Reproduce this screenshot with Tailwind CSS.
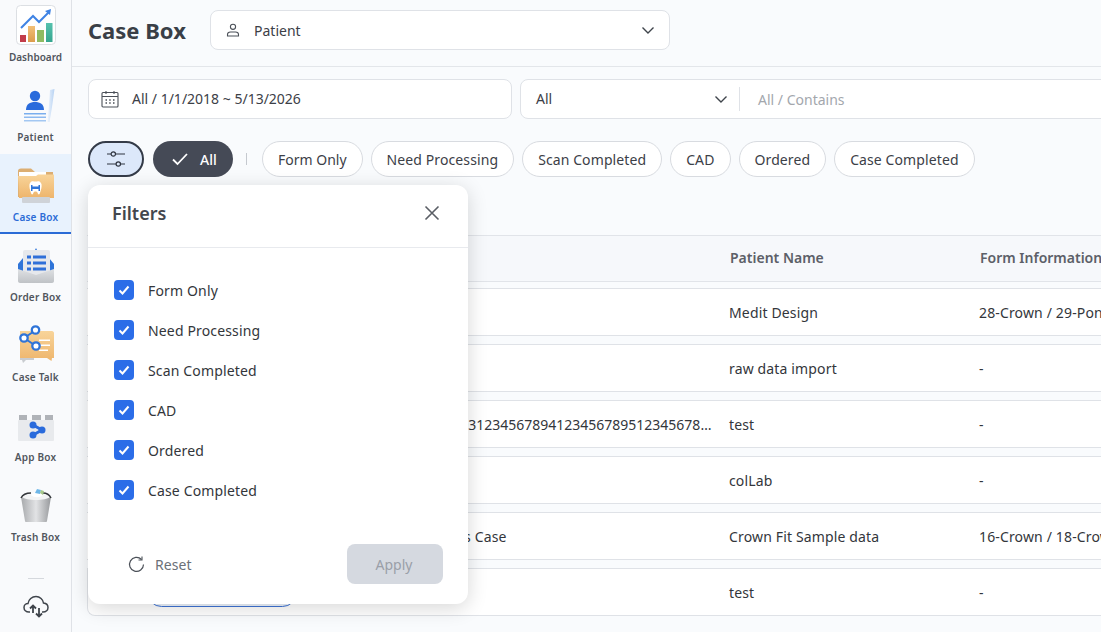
<!DOCTYPE html>
<html lang="en">
<head>
    <meta charset="UTF-8">
    <title>Case Box</title>
    <script src="https://cdn.jsdelivr.net/npm/@tailwindcss/browser@4"></script>
</head>
<body class="h-[632px] w-[1101px] overflow-hidden bg-[#f9fbfd] font-['Noto_Sans','Liberation_Sans',sans-serif] text-[14px] text-[#3c4047]">
<svg width="0" height="0" class="absolute">
    <defs>
        <linearGradient id="gOrange" x1="0" y1="0" x2="0" y2="1"><stop offset="0" stop-color="#f8d49a"/><stop offset="1" stop-color="#eeb56c"/></linearGradient>
        <linearGradient id="gTeal" x1="0" y1="0" x2="0" y2="1"><stop offset="0" stop-color="#57c2ae"/><stop offset="1" stop-color="#35a58f"/></linearGradient>
        <linearGradient id="gBar" x1="0" y1="0" x2="0" y2="1"><stop offset="0" stop-color="#f2c078"/><stop offset="1" stop-color="#dc9c4c"/></linearGradient>
        <linearGradient id="gBin" x1="0" y1="0" x2="1" y2="0"><stop offset="0" stop-color="#a7a9ac"/><stop offset=".5" stop-color="#e2e3e5"/><stop offset="1" stop-color="#97999c"/></linearGradient>
        <linearGradient id="gEnv" x1="0" y1="0" x2="0" y2="1"><stop offset="0" stop-color="#dfe1e4"/><stop offset="1" stop-color="#bfc2c6"/></linearGradient>
        <linearGradient id="gPaper" x1="0" y1="0" x2="1" y2="0"><stop offset="0" stop-color="#eef4fc"/><stop offset="1" stop-color="#b7d2f3"/></linearGradient>
    </defs>
</svg>
<div class="flex h-full">
    <!-- Sidebar -->
    <aside class="flex h-full w-[72px] shrink-0 flex-col items-center overflow-hidden border-r border-[#dfe2e7] bg-[#f9fafc]">
        <div class="-mt-[6px] w-full">
            <div class="flex h-[80px] flex-col items-center pt-[11px]">
                <svg class="h-[40px] w-[40px]" viewBox="0 0 40 40">
                    <rect x=".5" y=".5" width="39" height="39" rx="4" fill="#fff" stroke="#dcdfe3"/>
                    <rect x="4" y="30" width="6" height="7" fill="#c23c4a"/>
                    <rect x="12" y="21" width="7" height="16" fill="url(#gBar)"/>
                    <rect x="21" y="25" width="7" height="12" fill="#8fbb62"/>
                    <rect x="30" y="18" width="6.500" height="19" fill="url(#gTeal)"/>
                    <path d="M5 23L17 11L23 17L33 7" fill="none" stroke="#3f83e4" stroke-width="2"/>
                    <path d="M29 6L35 4L34 10Z" fill="#3f83e4"/>
                </svg>
                <span class="mt-[4px] h-[16px] text-[10px] font-semibold leading-[16px] text-[#50555c]">Dashboard</span>
            </div>
            <div class="flex h-[80px] flex-col items-center pt-[11px]">
                <svg class="h-[40px] w-[40px]" viewBox="0 0 40 40">
                    <path d="M34 5L38.500 4L36 22L33.500 37H31.500L33 20Z" fill="url(#gPaper)"/>
                    <circle cx="19" cy="11" r="5.200" fill="#2a6bdc"/>
                    <path d="M10 25C10 19 14 17 19 17S28 19 28 25Z" fill="#2a6bdc"/>
                    <rect x="8" y="28" width="22" height="1.500" fill="#7aaeee"/>
                    <rect x="8" y="31.500" width="22" height="1.500" fill="#8db9f0"/>
                    <rect x="8" y="35" width="22" height="1.500" fill="#a3c7f2"/>
                </svg>
                <span class="mt-[4px] h-[16px] text-[10px] font-semibold leading-[16px] tracking-[0.2px] text-[#50555c]">Patient</span>
            </div>
            <div class="flex h-[80px] flex-col items-center border-b-2 border-[#2b6bd6] bg-[#e8f2fd] pt-[11px]">
                <svg class="h-[40px] w-[40px]" viewBox="0 0 40 40">
                    <path d="M2 6C2 4.500 3 3.500 5 3.500H15L19 7H37V32H2Z" fill="#dcae72"/>
                    <rect x="3" y="7" width="27" height="4" fill="#fff"/>
                    <path d="M2 11H20L22 9.500H38V33H3Z" fill="url(#gOrange)"/>
                    <rect x="6" y="32" width="28" height="6" rx="1" fill="#cfd3d8"/>
                    <path d="M13.500 19C15 15 18 16.500 19.500 16.500S24 15 25.500 19C26 22 25 25 24 28C23.500 30 22 30 21.500 27.500C21 26 18 26 17.500 27.500C17 30 15.500 30 15 28C14 25 13 22 13.500 19Z" fill="#fff"/>
                    <path d="M15 20H16.500V21.500H22.500V20H24V26H22.500V24H16.500V26H15Z" fill="#2f74d8"/>
                </svg>
                <span class="mt-[4px] h-[16px] text-[10px] font-semibold leading-[16px] tracking-[0.2px] text-[#2b6bd6]">Case Box</span>
            </div>
            <div class="flex h-[80px] flex-col items-center pt-[11px]">
                <svg class="h-[40px] w-[40px]" viewBox="0 0 40 40">
                    <path d="M20 3L21 5H19Z" fill="#2f74d8"/>
                    <path d="M7 13L2 19V26H7Z" fill="#2f74d8"/>
                    <path d="M33 13L38 19V26H33Z" fill="#2f74d8"/>
                    <rect x="7" y="5" width="27" height="26" rx="2" fill="#e6e8ec"/>
                    <rect x="17" y="10.500" width="13" height="3" fill="#2f6fd8"/>
                    <rect x="17" y="16.500" width="13" height="3" fill="#2f6fd8"/>
                    <rect x="17" y="22.500" width="13" height="3" fill="#2f6fd8"/>
                    <rect x="11" y="10.500" width="4" height="3" fill="#2f6fd8"/>
                    <rect x="11" y="16.500" width="4" height="3" fill="#2f6fd8"/>
                    <rect x="11" y="22.500" width="4" height="3" fill="#2f6fd8"/>
                    <path d="M2 24L20 30L38 24V36C38 37 37 38 36 38H4C3 38 2 37 2 36Z" fill="url(#gEnv)"/>
                </svg>
                <span class="mt-[4px] h-[16px] text-[10px] font-semibold leading-[16px] tracking-[0.2px] text-[#50555c]">Order Box</span>
            </div>
            <div class="flex h-[80px] flex-col items-center pt-[11px]">
                <svg class="h-[40px] w-[40px]" viewBox="0 0 40 40">
                    <path d="M4 28H18V35H10L7 38L6 35H4Z" fill="#c9ccd0"/>
                    <path d="M4 6H36C37 6 38 7 38 8V33H36L35.500 36L31 33H4Z" fill="url(#gOrange)"/>
                    <rect x="23" y="14.500" width="11" height="1.500" fill="#fff"/>
                    <rect x="23" y="19.500" width="11" height="1.500" fill="#fff"/>
                    <rect x="23" y="24.500" width="9" height="1.500" fill="#fff"/>
                    <path d="M8 13L20 5M8 13L20 21" stroke="#2f74d8" stroke-width="2"/>
                    <circle cx="8" cy="13" r="3.700" fill="#fff" stroke="#2f74d8" stroke-width="2.300"/>
                    <circle cx="19.500" cy="5" r="3.700" fill="#fff" stroke="#2f74d8" stroke-width="2.300"/>
                    <circle cx="20" cy="21" r="3.700" fill="#fff" stroke="#2f74d8" stroke-width="2.300"/>
                </svg>
                <span class="mt-[4px] h-[16px] text-[10px] font-semibold leading-[16px] tracking-[0.2px] text-[#50555c]">Case Talk</span>
            </div>
            <div class="flex h-[80px] flex-col items-center pt-[11px]">
                <svg class="h-[40px] w-[40px]" viewBox="0 0 40 40">
                    <rect x="3" y="10" width="8" height="6" fill="#b0b3b8"/>
                    <rect x="16" y="10" width="9" height="6" fill="#b0b3b8"/>
                    <rect x="29" y="10" width="8" height="6" fill="#b0b3b8"/>
                    <rect x="2" y="15" width="36" height="21" rx="1" fill="#e8eaed"/>
                    <path d="M17 20L26 25L17 30" fill="none" stroke="#2a6bdc" stroke-width="3"/>
                    <circle cx="17" cy="20" r="3.500" fill="#2a6bdc"/>
                    <circle cx="26" cy="25" r="3.500" fill="#2a6bdc"/>
                    <circle cx="17" cy="30" r="3.500" fill="#2a6bdc"/>
                </svg>
                <span class="mt-[4px] h-[16px] text-[10px] font-semibold leading-[16px] tracking-[0.2px] text-[#50555c]">App Box</span>
            </div>
            <div class="flex h-[80px] flex-col items-center pt-[11px]">
                <svg class="h-[40px] w-[40px]" viewBox="0 0 40 40">
                    <path d="M5 12H35L31 36C31 37 30 37 29 37H11C10 37 9 37 9 36Z" fill="url(#gBin)"/>
                    <path d="M6 12C10 16 30 16 34 12C31 8 9 8 6 12Z" fill="#f3f4f5"/>
                    <path d="M5 13C7 9 11 8 15 8M35 13C33 9 31 8 27 8" fill="none" stroke="#33363a" stroke-width="1.500"/>
                    <path d="M15 10C16 7 19 7 20 8C22 6 26 7 27 10C24 13 18 13 15 10Z" fill="#fff"/>
                    <path d="M19 8L21 4L25 5L24 9Z" fill="#6fb7e8"/>
                    <path d="M24 8L25 5L28 6L27 10Z" fill="#a8c98a"/>
                </svg>
                <span class="mt-[4px] h-[16px] text-[10px] font-semibold leading-[16px] tracking-[0.2px] text-[#50555c]">Trash Box</span>
            </div>
        </div>
        <div class="mt-[24px] h-[1px] w-[16px] bg-[#d5d8dd]"></div>
        <svg class="mt-[16px] h-[24px] w-[26px]" viewBox="0 0 26 24" fill="none" stroke="#3f444b" stroke-width="1.500">
            <path d="M7 17H6C3 17 1 15 1 12.500C1 10 3 8.500 5 8.500C5.500 4.500 9 1.500 13 1.500C17 1.500 20 4.500 20.500 8C23 8.300 25 10 25 12.500C25 15 23 17 20 17H19"/>
            <path d="M10 18V11M7 13.500L10 10.500L13 13.500" stroke-width="1.800"/>
            <path d="M16 13V21M13 18.500L16 21.500L19 18.500" stroke-width="1.800"/>
        </svg>
    </aside>

    <!-- Main -->
    <main class="relative h-full min-w-0 flex-1 overflow-hidden">
        <header class="flex h-[67px] items-start border-b border-[#e3e6ea] pl-[16px]">
            <h1 class="mt-[13px] w-[122px] text-[22px] font-bold leading-[34px] text-[#3a3f47]">Case Box</h1>
            <div class="mt-[10px] flex h-[40px] w-[460px] items-center rounded-lg border border-[#dfe2e7] bg-white pl-[15px] pr-[14px]">
                <svg class="h-[14px] w-[14px]" viewBox="0 0 14 14" fill="none" stroke="#4b5058" stroke-width="1.100">
                    <circle cx="7" cy="3.800" r="2.600"/>
                    <path d="M1.500 13V11.500C1.500 10 3 9 4.500 9H9.500C11 9 12.500 10 12.500 11.500V13Z"/>
                </svg>
                <span class="ml-[14px] flex-1">Patient</span>
                <svg class="h-[14px] w-[14px]" viewBox="0 0 14 14" fill="none" stroke="#3f444b" stroke-width="1.400"><path d="M1.500 4.500L7 10L12.500 4.500"/></svg>
            </div>
        </header>

        <div class="pl-[16px]">
            <!-- Search row -->
            <div class="mt-[12px] flex w-[1200px] gap-[8px]">
                <div class="flex h-[40px] w-[424px] shrink-0 items-center rounded-lg border border-[#dfe2e7] bg-white pl-[12px]">
                    <svg class="h-[18px] w-[18px]" viewBox="0 0 18 18" fill="none" stroke="#4b5058" stroke-width="1.100">
                        <rect x="1" y="2.500" width="16" height="14.500" rx="1"/>
                        <path d="M1 6.500H17M5 1V4M13 1V4"/>
                        <path d="M4.500 10H6M8.200 10H9.700M12 10H13.500M4.500 13H6M8.200 13H9.700M12 13H13.500" stroke-width="1.300"/>
                    </svg>
                    <span class="ml-[13px] pb-[2px]">All / 1/1/2018 ~ 5/13/2026</span>
                </div>
                <div class="flex h-[40px] w-[700px] shrink-0 items-center rounded-lg border border-[#dfe2e7] bg-white pl-[15px]">
                    <span class="w-[178px] pb-[2px]">All</span>
                    <svg class="h-[14px] w-[14px]" viewBox="0 0 14 14" fill="none" stroke="#3f444b" stroke-width="1.400"><path d="M1.500 4.500L7 10L12.500 4.500"/></svg>
                    <div class="ml-[11px] h-[24px] w-px bg-[#dfe2e7]"></div>
                    <span class="ml-[18px] text-[#a3a7ad]">All / Contains</span>
                </div>
            </div>

            <!-- Status chips -->
            <div class="mt-[22px] flex h-[36px] items-center">
                <button class="flex h-[36px] w-[56px] items-center justify-center rounded-full border-2 border-[#343b48] bg-[#dce8fa]">
                    <svg class="h-[18px] w-[18px]" viewBox="0 0 18 18" fill="none" stroke="#2f3540" stroke-width="1.200">
                        <path d="M0 4H4M8.500 4H18M0 14H9M13.500 14H18"/>
                        <circle cx="6.300" cy="4" r="2.200"/>
                        <circle cx="11.300" cy="14" r="2.200"/>
                    </svg>
                </button>
                <button class="ml-[9px] flex h-[36px] w-[80px] items-center rounded-full bg-[#454a56] pl-[19px] font-medium text-white">
                    <svg class="h-[14px] w-[16px]" viewBox="0 0 16 14" fill="none" stroke="#fff" stroke-width="1.800"><path d="M1 7.500L5.500 12L15 2"/></svg>
                    <span class="ml-[12px]">All</span>
                </button>
                <div class="ml-[13px] h-[12px] w-px bg-[#c5c9cf]"></div>
                <div class="ml-[15px] flex gap-[8px]">
                    <span class="flex h-[36px] items-center rounded-full border border-[#d8dbe0] bg-white px-[15px]">Form Only</span>
                    <span class="flex h-[36px] items-center rounded-full border border-[#d8dbe0] bg-white px-[15px] tracking-[0.1px]">Need Processing</span>
                    <span class="flex h-[36px] items-center rounded-full border border-[#d8dbe0] bg-white px-[15px] tracking-[0.1px]">Scan Completed</span>
                    <span class="flex h-[36px] items-center rounded-full border border-[#d8dbe0] bg-white px-[15px] tracking-[0.1px]">CAD</span>
                    <span class="flex h-[36px] items-center rounded-full border border-[#d8dbe0] bg-white px-[15px] tracking-[0.1px]">Ordered</span>
                    <span class="flex h-[36px] items-center rounded-full border border-[#d8dbe0] bg-white px-[15px] tracking-[0.1px]">Case Completed</span>
                </div>
            </div>

            <!-- Table -->
            <div class="-ml-px mt-[58px] w-[1200px]">
                <div class="grid h-[47px] grid-cols-[642px_250px_1fr] items-center border-y border-[#e1e4e9] bg-[#f6f8fb] pb-[2px] font-semibold text-[#5c6068]">
                    <div></div>
                    <div class="pl-px">Patient Name</div>
                    <div class="pl-px">Form Information</div>
                </div>
                <div class="mt-[6px] grid h-[48px] grid-cols-[642px_250px_1fr] items-center border-y border-[#dfe2e7] bg-white tracking-[0.15px] text-[#33363b]">
                    <div></div>
                    <div>Medit Design</div>
                    <div>28-Crown / 29-Pontic</div>
                </div>
                <div class="mt-[8px] grid h-[48px] grid-cols-[642px_250px_1fr] items-center border-y border-[#dfe2e7] bg-white tracking-[0.15px] text-[#33363b]">
                    <div></div>
                    <div>raw data import</div>
                    <div>-</div>
                </div>
                <div class="mt-[8px] grid h-[48px] grid-cols-[642px_250px_1fr] items-center border-y border-[#dfe2e7] bg-white text-[#33363b]">
                    <div class="min-w-0 pl-[229px] pr-[15px]"><div class="truncate">123456789212345678931234567894123456789512345678961234567897</div></div>
                    <div class="tracking-[0.15px]">test</div>
                    <div>-</div>
                </div>
                <div class="mt-[8px] grid h-[48px] grid-cols-[642px_250px_1fr] items-center border-y border-[#dfe2e7] bg-white tracking-[0.15px] text-[#33363b]">
                    <div></div>
                    <div>colLab</div>
                    <div>-</div>
                </div>
                <div class="mt-[8px] grid h-[48px] grid-cols-[642px_250px_1fr] items-center border-y border-[#dfe2e7] bg-white tracking-[0.15px] text-[#33363b]">
                    <div class="pl-[377px]">s Case</div>
                    <div>Crown Fit Sample data</div>
                    <div>16-Crown / 18-Crown</div>
                </div>
                <div class="mt-[8px] grid h-[48px] grid-cols-[641px_250px_1fr] items-center rounded-bl-lg border border-r-0 border-[#dfe2e7] bg-white tracking-[0.15px] text-[#33363b]">
                    <div class="pl-[59px]"><div class="mt-[1px] h-[29px] w-[150px] rounded-full border border-[#3f74d6] bg-[#eef4fd]"></div></div>
                    <div>test</div>
                    <div>-</div>
                </div>
            </div>
        </div>

        <!-- Filters popover -->
        <div class="absolute left-[16px] top-[185px] flex h-[419px] w-[380px] flex-col rounded-xl bg-white shadow-[0_4px_20px_rgba(0,0,0,0.16)]">
            <div class="flex h-[63px] shrink-0 items-center justify-between border-b border-[#e8eaee] pb-[6px] pl-[24px] pr-[28px]">
                <h2 class="text-[18px] font-semibold text-[#43474e]">Filters</h2>
                <svg class="h-[16px] w-[16px]" viewBox="0 0 16 16" fill="none" stroke="#5a5e65" stroke-width="1.600"><path d="M1.500 1.500L14.500 14.500M14.500 1.500L1.500 14.500"/></svg>
            </div>
            <ul class="flex flex-col gap-[20px] pl-[26px] pt-[32px] tracking-[0.15px] text-[#33363b]">
                <li class="flex h-[20px] items-center gap-[14px]">
                    <span class="flex h-[20px] w-[20px] items-center justify-center rounded bg-[#2b6de8]"><svg class="h-[12px] w-[12px]" viewBox="0 0 12 12" fill="none" stroke="#fff" stroke-width="2"><path d="M1.500 6.500L4.500 9.500L10.500 2.500"/></svg></span>
                    Form Only
                </li>
                <li class="flex h-[20px] items-center gap-[14px]">
                    <span class="flex h-[20px] w-[20px] items-center justify-center rounded bg-[#2b6de8]"><svg class="h-[12px] w-[12px]" viewBox="0 0 12 12" fill="none" stroke="#fff" stroke-width="2"><path d="M1.500 6.500L4.500 9.500L10.500 2.500"/></svg></span>
                    Need Processing
                </li>
                <li class="flex h-[20px] items-center gap-[14px]">
                    <span class="flex h-[20px] w-[20px] items-center justify-center rounded bg-[#2b6de8]"><svg class="h-[12px] w-[12px]" viewBox="0 0 12 12" fill="none" stroke="#fff" stroke-width="2"><path d="M1.500 6.500L4.500 9.500L10.500 2.500"/></svg></span>
                    Scan Completed
                </li>
                <li class="flex h-[20px] items-center gap-[14px]">
                    <span class="flex h-[20px] w-[20px] items-center justify-center rounded bg-[#2b6de8]"><svg class="h-[12px] w-[12px]" viewBox="0 0 12 12" fill="none" stroke="#fff" stroke-width="2"><path d="M1.500 6.500L4.500 9.500L10.500 2.500"/></svg></span>
                    CAD
                </li>
                <li class="flex h-[20px] items-center gap-[14px]">
                    <span class="flex h-[20px] w-[20px] items-center justify-center rounded bg-[#2b6de8]"><svg class="h-[12px] w-[12px]" viewBox="0 0 12 12" fill="none" stroke="#fff" stroke-width="2"><path d="M1.500 6.500L4.500 9.500L10.500 2.500"/></svg></span>
                    Ordered
                </li>
                <li class="flex h-[20px] items-center gap-[14px]">
                    <span class="flex h-[20px] w-[20px] items-center justify-center rounded bg-[#2b6de8]"><svg class="h-[12px] w-[12px]" viewBox="0 0 12 12" fill="none" stroke="#fff" stroke-width="2"><path d="M1.500 6.500L4.500 9.500L10.500 2.500"/></svg></span>
                    Case Completed
                </li>
            </ul>
            <div class="mt-auto flex items-center justify-between pb-[20px] pl-[40px] pr-[25px]">
                <div class="flex items-center gap-[10px] tracking-[0.1px] text-[#6b7078]">
                    <svg class="h-[17px] w-[17px]" viewBox="0 0 17 17" fill="none" stroke="#4b5058" stroke-width="1.200">
                        <path d="M13.500 3.500A7 7 0 1 0 15.500 8.500"/>
                        <path d="M14 0.500V4H10.500" stroke-width="1.100"/>
                    </svg>
                    Reset
                </div>
                <button class="flex h-[40px] w-[96px] items-center justify-center rounded-lg bg-[#d5d9e0] pr-[2px] text-[#9a9fa8]">Apply</button>
            </div>
        </div>
    </main>
</div>
</body>
</html>
